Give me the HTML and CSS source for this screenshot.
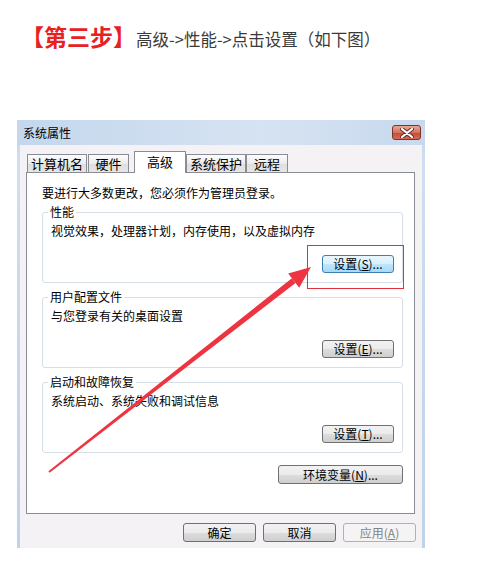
FILE: index.html
```html
<!DOCTYPE html>
<html>
<head>
    <meta charset="utf-8">
    <title>系统属性</title>
    <link rel="stylesheet" href="styles.css">
</head>
<body>
    <h1 class="step"><span class="step-no">【第三步】</span><span class="step-text">高级-&gt;性能-&gt;点击设置（如下图）</span></h1>

    <div class="window">
        <div class="titlebar">
            <span class="title">系统属性</span>
            <span class="close">
                <svg width="14" height="10" viewBox="0 0 14 10"><path d="M2 1 L12 9 M12 1 L2 9" stroke="#6b2a22" stroke-width="4" stroke-linecap="round"/><path d="M2 1 L12 9 M12 1 L2 9" stroke="#fff" stroke-width="2.2" stroke-linecap="round"/></svg>
            </span>
        </div>
        <div class="client">
            <div class="tabs">
                <div class="tab tab-name">计算机名</div>
                <div class="tab tab-hw">硬件</div>
                <div class="tab tab-adv active">高级</div>
                <div class="tab tab-prot">系统保护</div>
                <div class="tab tab-remote">远程</div>
            </div>
            <div class="panel">
                <p class="intro">要进行大多数更改，您必须作为管理员登录。</p>

                <fieldset class="group">
                    <legend>性能</legend>
                    <p>视觉效果，处理器计划，内存使用，以及虚拟内存</p>
                    <div class="row"><button class="btn btn-set focus">设置(<u>S</u>)...</button></div>
                </fieldset>

                <fieldset class="group">
                    <legend>用户配置文件</legend>
                    <p>与您登录有关的桌面设置</p>
                    <div class="row"><button class="btn btn-set">设置(<u>E</u>)...</button></div>
                </fieldset>

                <fieldset class="group">
                    <legend>启动和故障恢复</legend>
                    <p>系统启动、系统失败和调试信息</p>
                    <div class="row"><button class="btn btn-set">设置(<u>T</u>)...</button></div>
                </fieldset>

                <div class="row env-row"><button class="btn btn-env">环境变量(<u>N</u>)...</button></div>
            </div>
            <div class="actions">
                <button class="btn btn-act">确定</button>
                <button class="btn btn-act">取消</button>
                <button class="btn btn-act" disabled>应用(<u>A</u>)</button>
            </div>
        </div>
    </div>

    <!-- 标注 -->
    <div class="mark"></div>
    <svg class="arrow" width="501" height="575" viewBox="0 0 501 575">
        <polygon points="48.4,471.2 49.6,472.8 295.5,283 291.9,278.2" fill="#ee3341"/>
        <polygon points="311,267 299.2,287.7 288.2,273.5" fill="#ee3341"/>
    </svg>
</body>
</html>
```

FILE: styles.css
```css
body {
    margin: 0;
    background: #fff;
    font-family: "Noto Sans CJK SC", sans-serif;
    color: #000;
}

.step {
    margin: 23px 0 0 21px;
    height: 26px;
    font-size: 23px;
    font-weight: normal;
    line-height: 26px;
    white-space: nowrap;
}

.step-no {
    color: #e8211f;
    font-weight: bold;
}

.step-text {
    color: #3a3a3a;
    font-size: 16.5px;
    line-height: 17px;
}

.window {
    width: 408px;
    height: 428px;
    margin: 71px 0 0 17px;
    padding: 0 3px;
    box-sizing: border-box;
    background: linear-gradient(to bottom, #c2d5ec, #cfdef0 40px, #bfd2e8);
    display: flex;
    flex-direction: column;
}

.titlebar {
    height: 25px;
    display: flex;
    justify-content: space-between;
    align-items: flex-start;
    background: linear-gradient(to right, #c4d7ed, #d6e3f2 60%, #c8d9ee);
    margin: 0 -3px;
    padding: 0 4px 0 6px;
}

.title {
    font-size: 12px;
    line-height: 25px;
}

.close {
    margin-top: 5px;
    width: 29px;
    height: 15px;
    box-sizing: border-box;
    border: 1px solid #7a3328;
    border-radius: 3px;
    background: linear-gradient(to bottom, #e7a897, #d7705e 50%, #c44a36 51%, #d46b55);
    display: flex;
    justify-content: center;
    align-items: center;
}

.client {
    flex: 1;
    background: #f5f2f5;
    padding: 6px 7px 0 6px;
    display: flex;
    flex-direction: column;
}

.tabs {
    height: 21px;
    display: flex;
    align-items: flex-end;
}

.tab {
    height: 18px;
    box-sizing: border-box;
    border: 1px solid #898c95;
    border-bottom: 0;
    background: linear-gradient(to bottom, #fdfdfd, #ebebeb 50%, #dedede 51%, #e6e6e6);
    font-size: 13px;
    line-height: 17px;
    text-align: center;
}

.tab-name { width: 60px; margin-left: 1px; }
.tab-hw { width: 41px; margin-left: 1px; }
.tab-adv { width: 52px; margin-left: 5px; }
.tab-prot { width: 60px; }
.tab-remote { width: 42px; }

.tab.active {
    height: 22px;
    margin-bottom: -1px;
    background: #fff;
    position: relative;
    z-index: 1;
    line-height: 19px;
}

.panel {
    height: 342px;
    box-sizing: border-box;
    border: 1px solid #898c95;
    background: #fff;
    padding: 12px 11px 0 15px;
}

.panel p {
    margin: 0;
    font-size: 12px;
    line-height: 16px;
}

.group {
    margin: 7px 0 0;
    min-width: 0;
    padding: 4px 8px 9px 8px;
    border: 1px solid #d5dfe5;
    border-radius: 3px;
}

.intro + .group {
    margin-top: 4px;
}

.group legend {
    margin-left: -3px;
    padding: 0 2px;
    font-size: 12px;
    line-height: 14px;
}

.row {
    display: flex;
    justify-content: flex-end;
}

.group .row {
    margin-top: 16px;
}

.btn {
    font-family: "Noto Sans CJK SC", sans-serif;
    font-size: 12px;
    color: #000;
    padding: 0;
    box-sizing: border-box;
    border: 1px solid #707070;
    border-radius: 3px;
    background: linear-gradient(to bottom, #f2f2f2, #ebebeb 50%, #dddddd 51%, #cfcfcf);
    line-height: 16px;
}

.btn u {
    text-underline-offset: 1px;
}

.btn-set {
    width: 72px;
    height: 18px;
}

.btn.focus {
    border-color: #3c7fb1;
    background: linear-gradient(to bottom, #eaf6fd, #d9f0fc 50%, #bee6fd 51%, #a7d9f5);
}

.env-row {
    margin-top: 12px;
}

.btn-env {
    width: 125px;
    height: 19px;
}

.actions {
    display: flex;
    justify-content: flex-end;
    gap: 7px;
    padding-top: 9px;
    margin-right: -1px;
}

.btn-act {
    width: 73px;
    height: 19px;
}

.btn:disabled {
    border-color: #adb2b5;
    background: #f4f4f4;
    color: #838383;
}

/* 标注 */
.mark {
    position: absolute;
    left: 307px;
    top: 245px;
    width: 95px;
    height: 42px;
    border: 1px solid #e0313c;
}

.arrow {
    position: absolute;
    left: 0;
    top: 0;
    pointer-events: none;
}
```
